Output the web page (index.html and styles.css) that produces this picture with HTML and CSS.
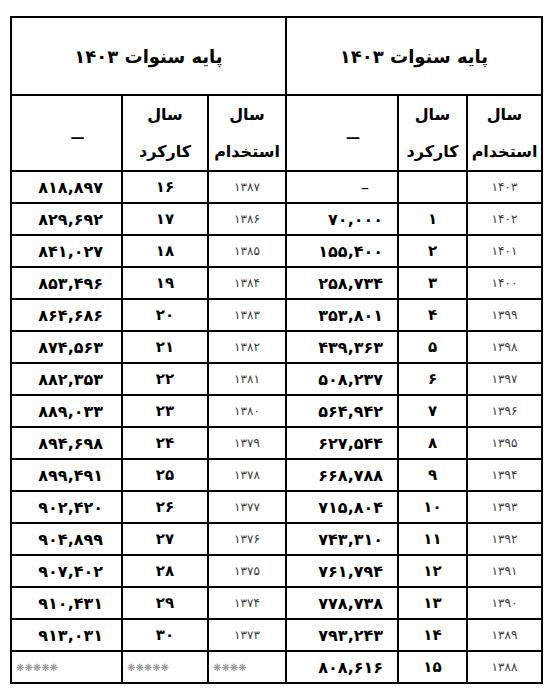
FILE: index.html
```html
<!DOCTYPE html>
<html lang="fa">
<head>
<meta charset="utf-8">
<link rel="stylesheet" href="styles.css">
</head>
<body>
<div class="page">
<table class="grid" dir="rtl">
<colgroup>
<col class="c-year"><col class="c-work"><col class="c-amt">
<col class="c-year2"><col class="c-work2"><col class="c-amt2">
</colgroup>
<tr class="head1">
<th colspan="3">پایه سنوات ۱۴۰۳</th>
<th colspan="3">پایه سنوات ۱۴۰۳</th>
</tr>
<tr class="head2">
<th><span class="hl">سال</span><span class="hl">استخدام</span></th><th><span class="hl">سال</span><span class="hl">کارکرد</span></th><th class="dash"><span class="dash-mark">—</span></th>
<th><span class="hl">سال</span><span class="hl">استخدام</span></th><th><span class="hl">سال</span><span class="hl">کارکرد</span></th><th class="dash"><span class="dash-mark">—</span></th>
</tr>
<tr><td class="yr">۱۴۰۳</td><td class="wk"></td><td class="amt amt-nil">–</td><td class="yr">۱۳۸۷</td><td class="wk">۱۶</td><td class="amt amt-l">۸۱۸,۸۹۷</td></tr>
<tr><td class="yr">۱۴۰۲</td><td class="wk">۱</td><td class="amt">۷۰,۰۰۰</td><td class="yr">۱۳۸۶</td><td class="wk">۱۷</td><td class="amt amt-l">۸۲۹,۶۹۲</td></tr>
<tr><td class="yr">۱۴۰۱</td><td class="wk">۲</td><td class="amt">۱۵۵,۴۰۰</td><td class="yr">۱۳۸۵</td><td class="wk">۱۸</td><td class="amt amt-l">۸۴۱,۰۲۷</td></tr>
<tr><td class="yr">۱۴۰۰</td><td class="wk">۳</td><td class="amt">۲۵۸,۷۳۴</td><td class="yr">۱۳۸۴</td><td class="wk">۱۹</td><td class="amt amt-l">۸۵۳,۴۹۶</td></tr>
<tr><td class="yr">۱۳۹۹</td><td class="wk">۴</td><td class="amt">۳۵۳,۸۰۱</td><td class="yr">۱۳۸۳</td><td class="wk">۲۰</td><td class="amt amt-l">۸۶۴,۶۸۶</td></tr>
<tr><td class="yr">۱۳۹۸</td><td class="wk">۵</td><td class="amt">۴۳۹,۳۶۳</td><td class="yr">۱۳۸۲</td><td class="wk">۲۱</td><td class="amt amt-l">۸۷۴,۵۶۳</td></tr>
<tr><td class="yr">۱۳۹۷</td><td class="wk">۶</td><td class="amt">۵۰۸,۲۳۷</td><td class="yr">۱۳۸۱</td><td class="wk">۲۲</td><td class="amt amt-l">۸۸۲,۳۵۳</td></tr>
<tr><td class="yr">۱۳۹۶</td><td class="wk">۷</td><td class="amt">۵۶۴,۹۴۲</td><td class="yr">۱۳۸۰</td><td class="wk">۲۳</td><td class="amt amt-l">۸۸۹,۰۳۳</td></tr>
<tr><td class="yr">۱۳۹۵</td><td class="wk">۸</td><td class="amt">۶۲۷,۵۴۴</td><td class="yr">۱۳۷۹</td><td class="wk">۲۴</td><td class="amt amt-l">۸۹۴,۶۹۸</td></tr>
<tr><td class="yr">۱۳۹۴</td><td class="wk">۹</td><td class="amt">۶۶۸,۷۸۸</td><td class="yr">۱۳۷۸</td><td class="wk">۲۵</td><td class="amt amt-l">۸۹۹,۴۹۱</td></tr>
<tr><td class="yr">۱۳۹۳</td><td class="wk">۱۰</td><td class="amt">۷۱۵,۸۰۴</td><td class="yr">۱۳۷۷</td><td class="wk">۲۶</td><td class="amt amt-l">۹۰۲,۴۲۰</td></tr>
<tr><td class="yr">۱۳۹۲</td><td class="wk">۱۱</td><td class="amt">۷۴۳,۳۱۰</td><td class="yr">۱۳۷۶</td><td class="wk">۲۷</td><td class="amt amt-l">۹۰۴,۸۹۹</td></tr>
<tr><td class="yr">۱۳۹۱</td><td class="wk">۱۲</td><td class="amt">۷۶۱,۷۹۴</td><td class="yr">۱۳۷۵</td><td class="wk">۲۸</td><td class="amt amt-l">۹۰۷,۴۰۲</td></tr>
<tr><td class="yr">۱۳۹۰</td><td class="wk">۱۳</td><td class="amt">۷۷۸,۷۳۸</td><td class="yr">۱۳۷۴</td><td class="wk">۲۹</td><td class="amt amt-l">۹۱۰,۴۳۱</td></tr>
<tr><td class="yr">۱۳۸۹</td><td class="wk">۱۴</td><td class="amt">۷۹۳,۲۴۳</td><td class="yr">۱۳۷۳</td><td class="wk">۳۰</td><td class="amt amt-l">۹۱۳,۰۳۱</td></tr>
<tr><td class="yr">۱۳۸۸</td><td class="wk">۱۵</td><td class="amt">۸۰۸,۶۱۶</td><td class="stars">❋❋❋❋</td><td class="stars">❋❋❋❋❋</td><td class="stars">❋❋❋❋❋</td></tr>
</table>
</div>
</body>
</html>
```
FILE: styles.css
```css
html, body {
  margin: 0;
  padding: 0;
  background: #ffffff;
}
.page {
  padding: 16px 0 0 10px;
}
.grid {
  border-collapse: collapse;
  table-layout: fixed;
  width: 531px;
  font-family: "DejaVu Sans", sans-serif;
  color: #000;
}
.c-year { width: 75px; }
.c-work { width: 69px; }
.c-amt { width: 112px; }
.c-year2 { width: 78px; }
.c-work2 { width: 86px; }
.c-amt2 { width: 111px; }
.grid th, .grid td {
  border: 2px solid #000;
  padding: 0;
}
.head1 th {
  height: 76px;
  font-size: 18px;
  font-weight: bold;
}
.head2 th {
  height: 74px;
  font-size: 16px;
  font-weight: bold;
  line-height: 20px;
}
.hl {
  display: flex;
  height: 37px;
  align-items: center;
  justify-content: center;
  overflow: hidden;
}
.dash-mark {
  display: inline-block;
  margin-top: 8px;
  margin-left: 22px;
  font-size: 14px;
  font-weight: bold;
}
.grid td {
  height: 30px;
}
.yr {
  text-align: center;
  font-size: 12px;
  color: #3a3a3a;
}
.wk {
  text-align: center;
  font-size: 15px;
  font-weight: bold;
}
.amt {
  text-align: right;
  font-size: 16px;
  font-weight: bold;
  padding-right: 14px !important;
  direction: ltr;
}
.amt-l {
  padding-right: 18px !important;
}
.amt-nil {
  padding-right: 28px !important;
  font-weight: normal;
}
.stars {
  direction: ltr;
  text-align: left;
  font-size: 10px;
  color: #8a8a8a;
  padding-left: 4px !important;
}
```
